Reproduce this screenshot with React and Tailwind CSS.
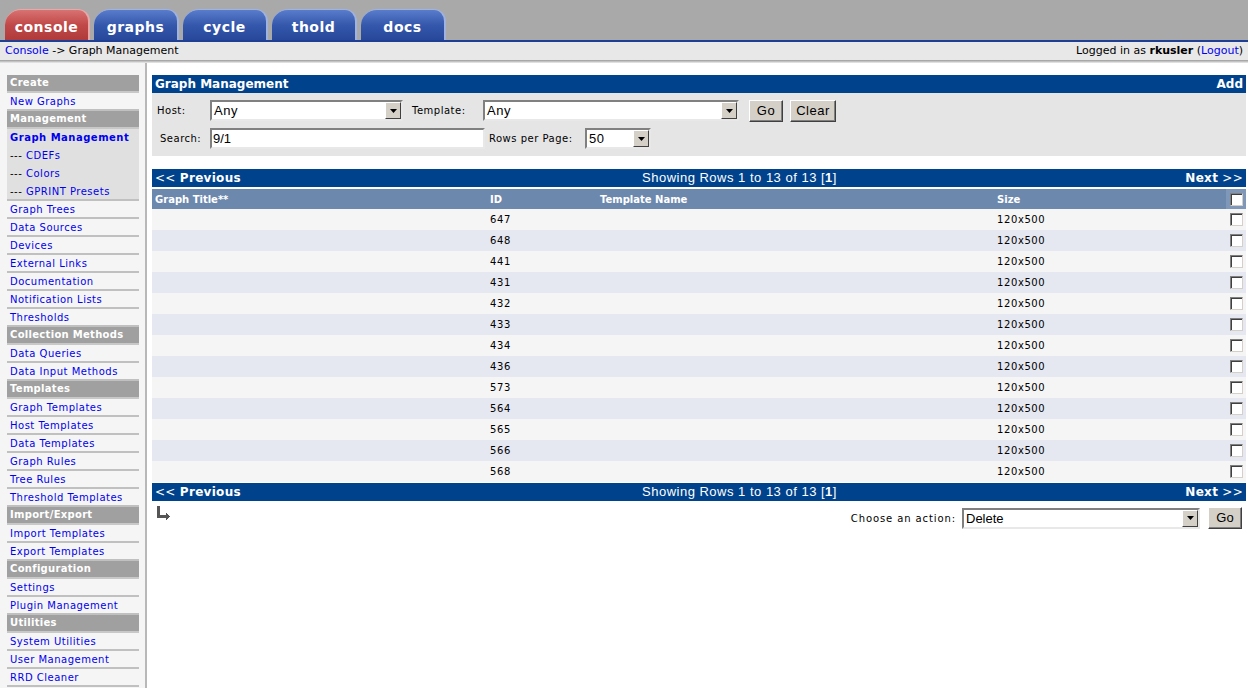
import React from 'react';

const tabs = [
    { label: 'console', active: true },
    { label: 'graphs' },
    { label: 'cycle' },
    { label: 'thold' },
    { label: 'docs' },
];

const menu = [
    { h: 'Create' },
    { t: 'New Graphs' },
    { h: 'Management' },
    { t: 'Graph Management', sel: true, bold: true },
    { t: 'CDEFs', sel: true, sub: true },
    { t: 'Colors', sel: true, sub: true },
    { t: 'GPRINT Presets', sel: true, sub: true, last: true },
    { t: 'Graph Trees' },
    { t: 'Data Sources' },
    { t: 'Devices' },
    { t: 'External Links' },
    { t: 'Documentation' },
    { t: 'Notification Lists' },
    { t: 'Thresholds' },
    { h: 'Collection Methods' },
    { t: 'Data Queries' },
    { t: 'Data Input Methods' },
    { h: 'Templates' },
    { t: 'Graph Templates' },
    { t: 'Host Templates' },
    { t: 'Data Templates' },
    { t: 'Graph Rules' },
    { t: 'Tree Rules' },
    { t: 'Threshold Templates' },
    { h: 'Import/Export' },
    { t: 'Import Templates' },
    { t: 'Export Templates' },
    { h: 'Configuration' },
    { t: 'Settings' },
    { t: 'Plugin Management' },
    { h: 'Utilities' },
    { t: 'System Utilities' },
    { t: 'User Management' },
    { t: 'RRD Cleaner' },
];

const ids = ['647', '648', '441', '431', '432', '433', '434', '436', '573', '564', '565', '566', '568'];

const Check = () => (
    <span className="block w-[13px] h-[13px] bg-white border border-t-[#808080] border-l-[#808080] border-b-[#d4d0c8] border-r-[#d4d0c8] shadow-[inset_1px_1px_0_#404040]" />
);

const Select = ({ value, width }) => (
    <div
        className="flex items-stretch h-[21px] bg-white border-2 border-t-[#808080] border-l-[#808080] border-b-[#e8e8e8] border-r-[#e8e8e8]"
        style={{ width }}
    >
        <span className="flex-1 pl-[2px] text-[13px] leading-[17px] text-black font-['Liberation_Sans',sans-serif]">{value}</span>
        <span className="w-[16px] bg-[#d4d0c8] border border-t-white border-l-white border-b-[#404040] border-r-[#404040] flex items-center justify-center">
            <svg width="7" height="4" viewBox="0 0 7 4"><path d="M0 0h7L3.5 4z" fill="#000" /></svg>
        </span>
    </div>
);

const Button = ({ children, w }) => (
    <button
        className="h-[22px] bg-[#d4d0c8] border border-t-white border-l-white border-b-[#404040] border-r-[#404040] text-[13px] text-black font-['Liberation_Sans',sans-serif] shadow-[inset_-1px_-1px_0_#808080]"
        style={{ width: w }}
    >
        {children}
    </button>
);

const NavBar = () => (
    <div className="h-[18px] bg-[#00438c] flex items-center px-[3px] text-white">
        <span className="text-[12px] w-[487px] tracking-[0.3px]"><span>&lt;&lt; </span><b>Previous</b></span>
        <span className="flex-1 font-['Liberation_Sans',sans-serif] text-[13px] tracking-[0.5px]">Showing Rows 1 to 13 of 13 [<b>1</b>]</span>
        <span className="text-[12px] text-right tracking-[0.3px]"><b>Next</b> &gt;&gt;</span>
    </div>
);

const App = () => {
    return (
        <div className="w-full min-h-[688px] bg-white font-['DejaVu_Sans',Verdana,sans-serif] text-black">
            {/* top tabs */}
            <div className="h-[40px] bg-[#a9a9a9] flex items-end pl-[5px] gap-[4px]">
                {tabs.map((tab) => (
                    <div
                        key={tab.label}
                        className={
                            tab.active
                                ? 'w-[85px] h-[31px] pt-[4px] rounded-tl-[16px] rounded-tr-[12px] bg-gradient-to-b from-[#d87272] via-[#c04848] to-[#b03a3a] border-r-2 border-t border-[#e8a8a8] flex items-center justify-center'
                                : 'w-[85px] h-[31px] pt-[4px] rounded-tl-[16px] rounded-tr-[12px] bg-gradient-to-b from-[#5a7ccc] via-[#3558ac] to-[#27479a] border-r-2 border-t border-[#9fb3e0] flex items-center justify-center'
                        }
                    >
                        <span className="text-white font-bold text-[14px] tracking-[0.5px]">{tab.label}</span>
                    </div>
                ))}
            </div>
            <div className="h-[2px] bg-[#1f3f94]" />
            <div className="h-[18px] bg-[#e8e8e8] flex items-center justify-between px-[5px] pt-[1px] text-[11px]">
                <span><span className="text-[#0000ee]">Console</span> -&gt; Graph Management</span>
                <span>Logged in as <b>rkusler</b> (<span className="text-[#0000ee]">Logout</span>)</span>
            </div>
            <div className="h-[3px] bg-gradient-to-b from-[#9a9a9a] to-[#eeeeee]" />

            <div className="flex">
                {/* sidebar */}
                <div className="w-[147px] shrink-0 bg-[#f5f5f5] border-r-2 border-[#b8b8b8] pt-[12px] pl-[7px] pr-[6px] min-h-[625px]">
                    {menu.map((m, i) =>
                        m.h ? (
                            <div key={i} className="h-[18px] bg-[#a0a0a0] border-b-2 border-[#c8c8c8] pl-[3px] text-white font-bold text-[10px] leading-[16px] tracking-[0.3px]">
                                {m.h}
                            </div>
                        ) : (
                            <div
                                key={i}
                                className={
                                    m.sel && !m.last
                                        ? 'h-[18px] bg-[#e0e0e0] pl-[3px] text-[10px] leading-[17px] tracking-[0.5px]'
                                        : m.sel
                                        ? 'h-[18px] bg-[#e0e0e0] border-b-2 border-[#c0c0c0] pl-[3px] text-[10px] leading-[17px] tracking-[0.5px]'
                                        : 'h-[18px] border-b-2 border-[#c0c0c0] pl-[3px] text-[10px] leading-[17px] tracking-[0.5px]'
                                }
                            >
                                {m.sub && <span className="text-black">--- </span>}
                                <span className={m.bold ? 'text-[#0000ee] font-bold' : 'text-[#0000ee]'}>{m.t}</span>
                            </div>
                        )
                    )}
                </div>

                {/* main */}
                <div className="flex-1 pl-[5px] pr-[2px] pt-[12px]">
                    <div className="h-[18px] bg-[#00438c] flex items-center justify-between px-[3px] text-white font-bold text-[12px]">
                        <span>Graph Management</span>
                        <span>Add</span>
                    </div>
                    <div className="h-[63px] bg-[#e5e5e5] pt-[7px] pl-[5px] text-[10px] tracking-[0.5px]">
                        <div className="flex items-center h-[21px]">
                            <span className="w-[53px]">Host:</span>
                            <Select value="Any" width={193} />
                            <span className="ml-[9px] w-[71px]">Template:</span>
                            <Select value="Any" width={256} />
                            <span className="ml-[10px]"><Button w={34}>Go</Button></span>
                            <span className="ml-[7px]"><Button w={46}>Clear</Button></span>
                        </div>
                        <div className="flex items-center h-[21px] mt-[7px]">
                            <span className="w-[53px] pl-[3px]">Search:</span>
                            <div className="w-[275px] h-[21px] bg-white border-2 border-t-[#808080] border-l-[#808080] border-b-[#e8e8e8] border-r-[#e8e8e8] pl-[1px] text-[13px] leading-[17px] font-['Liberation_Sans',sans-serif] tracking-normal">9/1</div>
                            <span className="ml-[4px] w-[96px]">Rows per Page:</span>
                            <Select value="50" width={66} />
                        </div>
                    </div>

                    <div className="mt-[13px]">
                        <NavBar />
                    </div>
                    <div className="mt-[2px] h-[20px] bg-[#6d88ad] grid grid-cols-[335px_110px_397px_1fr_20px] items-center text-white font-bold text-[10px]">
                        <span className="pl-[3px]">Graph Title**</span>
                        <span className="pl-[3px]">ID</span>
                        <span className="pl-[3px]">Template Name</span>
                        <span className="pl-[3px]">Size</span>
                        <span className="h-full bg-[#7f97b8] flex items-center justify-center"><Check /></span>
                    </div>
                    {ids.map((id, i) => (
                        <div
                            key={id}
                            className={
                                'h-[21px] grid grid-cols-[335px_110px_397px_1fr_20px] items-center text-[10px] tracking-[0.6px] ' +
                                (i % 2 === 0 ? 'bg-[#f5f5f5]' : 'bg-[#e6e8f1]')
                            }
                        >
                            <span />
                            <span className="pl-[3px]">{id}</span>
                            <span />
                            <span className="pl-[3px]">120x500</span>
                            <span className="flex justify-center"><Check /></span>
                        </div>
                    ))}
                    <div className="mt-[1px]">
                        <NavBar />
                    </div>
                    <div className="flex justify-between items-start">
                        <svg className="ml-[5px] mt-[5px]" width="13" height="14" viewBox="0 0 13 14">
                            <path d="M0 0h3v9h6V7h1v1h1v1h1v1h1v1h-1v1h-1v1h-1v1H9v-2H0z" fill="#555" />
                        </svg>
                        <div className="flex items-center mt-[6px] text-[10px]">
                            <span className="mr-[6px] tracking-[0.9px]">Choose an action:</span>
                            <Select value="Delete" width={238} />
                            <span className="ml-[8px] mr-[4px]"><Button w={34}>Go</Button></span>
                        </div>
                    </div>
                </div>
            </div>
        </div>
    );
};

export default App;
